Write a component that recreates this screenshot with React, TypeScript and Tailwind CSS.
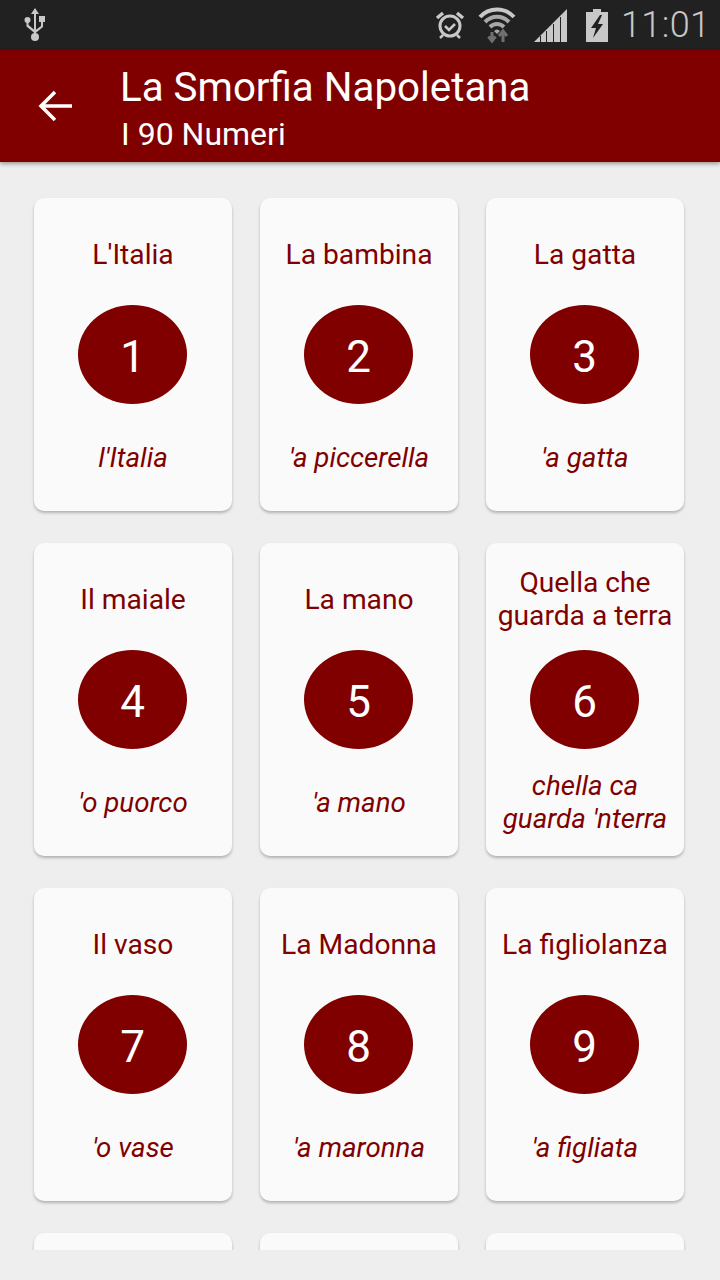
const numeri = [
  { n: 1, it: ["L'Italia"], nap: ["l'Italia"] },
  { n: 2, it: ["La bambina"], nap: ["'a piccerella"] },
  { n: 3, it: ["La gatta"], nap: ["'a gatta"] },
  { n: 4, it: ["Il maiale"], nap: ["'o puorco"] },
  { n: 5, it: ["La mano"], nap: ["'a mano"] },
  { n: 6, it: ["Quella che", "guarda a terra"], nap: ["chella ca", "guarda 'nterra"] },
  { n: 7, it: ["Il vaso"], nap: ["'o vase"] },
  { n: 8, it: ["La Madonna"], nap: ["'a maronna"] },
  { n: 9, it: ["La figliolanza"], nap: ["'a figliata"] },
];

function StatusIcons() {
  return (
    <div className="flex items-center">
      {/* sveglia */}
      <svg width="30" height="30" viewBox="0 0 30 30" className="ml-[411px]" fill="none" stroke="#c8c8c8">
        <circle cx="15" cy="16" r="10" strokeWidth="3" />
        <path d="M10 16l4 4 6-6" strokeWidth="2.5" />
        <path d="M2 8l6-5M28 8l-6-5" strokeWidth="3.5" />
        <path d="M8 25l-3 3M22 25l3 3" strokeWidth="2.5" />
      </svg>
      {/* wifi */}
      <svg width="38" height="36" viewBox="0 0 38 36" className="ml-[13px]" fill="none">
        <path d="M2 10C11 0 27 0 36 10" stroke="#c8c8c8" strokeWidth="4" />
        <path d="M7 15c7-7 17-7 24 0" stroke="#a8a8a8" strokeWidth="4" />
        <path d="M12 20c4-4 10-4 14 0" stroke="#a8a8a8" strokeWidth="4" />
        <path d="M16 24c2-2 4-2 6 0l-3 3z" fill="#a8a8a8" />
        <path d="M14 25v8M10.500 29.500l3.500 4.500 3.500-4.500" stroke="#707070" strokeWidth="3" />
        <path d="M25 35v-9M21 29l4-5 4 5" stroke="#707070" strokeWidth="3" />
      </svg>
      {/* segnale */}
      <svg width="34" height="34" viewBox="0 0 34 34" className="ml-[18px] mt-[1px]">
        <path d="M0 33L33 0v33h-6V8h-1v25h-6V15h-1v18h-6V22h-1v11h-5V27h-1v6z" fill="#c8c8c8" />
      </svg>
      {/* batteria */}
      <svg width="22" height="33" viewBox="0 0 22 33" className="ml-[18px]">
        <path d="M7 0h8v3h7v30H0V3h7z" fill="#c8c8c8" />
        <path d="M14 6L5 19h5l-3 10 10-14h-5l4-9z" fill="#212121" />
      </svg>
      <span className="ml-[13px] text-[36px] font-light leading-none tracking-[0.4px] text-[#c8c8c8]">11:01</span>
    </div>
  );
}

export default function App() {
  return (
    <div className="flex h-[1280px] w-[720px] flex-col bg-[#eeeeee] font-['Roboto',sans-serif]">
      <div className="relative flex h-[50px] items-center bg-[#212121] pl-[24px]">
        <svg width="22" height="36" viewBox="0 0 22 36" className="absolute left-[24px] top-[7px]" fill="#c8c8c8">
          <path d="M11 1l4 6h-3v20h-2V7H7z" />
          <circle cx="11" cy="30" r="4" />
          <circle cx="3.500" cy="13" r="3" />
          <rect x="15" y="9" width="6" height="6" />
          <path d="M2.500 14h2v4l6 5v3l-8-6.500zM17 14h2v6l-8 6.500v-3l6-4.500z" />
        </svg>
        <StatusIcons />
      </div>
      <div className="relative z-10 flex h-[112px] items-center bg-[#800000] shadow-[0_2px_4px_rgba(0,0,0,0.35)]">
        <svg width="36" height="36" viewBox="0 0 36 36" className="ml-[38px]" fill="none" stroke="#ffffff" strokeWidth="3.500">
          <path d="M3 18h31M17 4L3 18l14 14" />
        </svg>
        <div className="ml-[47px] mt-[8px] text-white">
          <div className="ml-[-1px] text-[40.300px] leading-[44px]">La Smorfia Napoletana</div>
          <div className="mt-[4px] text-[32px] leading-[40px]">I 90 Numeri</div>
        </div>
      </div>
      <div className="h-[1088px] overflow-hidden">
        <div className="grid grid-cols-[198px_198px_198px] gap-x-[28px] gap-y-[32px] pl-[34px] pt-[36px]">
          {numeri.map((item) => (
            <div
              key={item.n}
              className="flex h-[313px] flex-col items-center rounded-[10px] bg-[#fafafa] pt-[23px] text-center text-[28.200px] leading-[33px] text-[#800000] shadow-[0_2px_3px_rgba(0,0,0,0.25)]"
            >
              <div className="flex h-[66px] flex-col justify-center whitespace-nowrap">
                {item.it.map((riga) => (
                  <div key={riga}>{riga}</div>
                ))}
              </div>
              <div className="mt-[18px] flex h-[99px] w-[109px] items-center justify-center self-start ml-[44px] rounded-[50%] bg-[#800000] pt-[5px] text-[44px] leading-none text-white">
                {item.n}
              </div>
              <div className="mt-[20px] flex h-[66px] flex-col justify-center whitespace-nowrap text-[27.700px] italic">
                {item.nap.map((riga) => (
                  <div key={riga}>{riga}</div>
                ))}
              </div>
            </div>
          ))}
          {/* quarta riga, tagliata dal bordo dello scroll */}
          <div className="h-[313px] rounded-[10px] bg-[#fafafa] shadow-[0_2px_3px_rgba(0,0,0,0.25)]" />
          <div className="h-[313px] rounded-[10px] bg-[#fafafa] shadow-[0_2px_3px_rgba(0,0,0,0.25)]" />
          <div className="h-[313px] rounded-[10px] bg-[#fafafa] shadow-[0_2px_3px_rgba(0,0,0,0.25)]" />
        </div>
      </div>
    </div>
  );
}
